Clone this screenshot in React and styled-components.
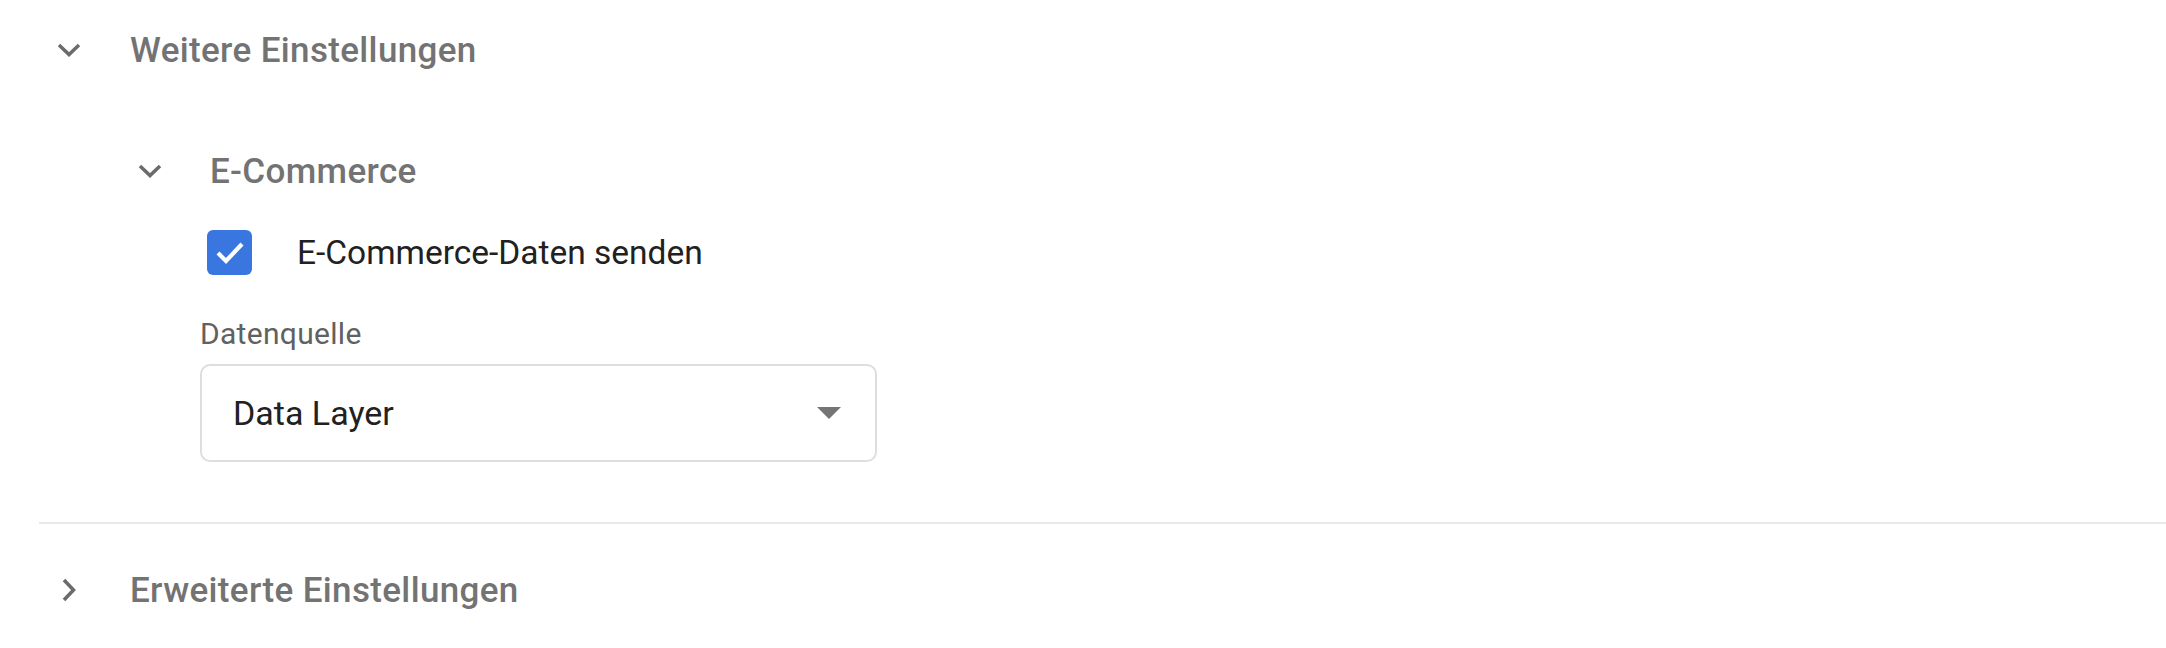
import React from 'react'
import styled, { createGlobalStyle } from 'styled-components'

const GlobalStyle = createGlobalStyle`
  html, body {
    margin: 0;
    padding: 0;
    background: #ffffff;
  }
  body {
    font-family: Roboto, "Liberation Sans", Arial, sans-serif;
    -webkit-font-smoothing: antialiased;
  }
`

const Page = styled.div`
  width: 2166px;
  height: 648px;
  overflow: hidden;
  background: #fff;
`

const HeaderRow = styled.div`
  display: flex;
  align-items: center;
  height: ${(p) => p.$height}px;
  padding-left: ${(p) => p.$indent}px;
  margin-top: ${(p) => p.$top || 0}px;
  gap: ${(p) => p.$gap}px;
  cursor: pointer;
`

const IconBox = styled.span`
  display: flex;
  align-items: center;
  justify-content: center;
  width: 24px;
  height: 24px;
  color: #6b6b6b;
  flex: none;
`

const HeaderTitle = styled.span`
  font-size: 35px;
  font-weight: 500;
  color: #737373;
  letter-spacing: 0.35px;
  line-height: 1;
`

const Body = styled.div`
  padding-left: 200px;
`

const CheckRow = styled.label`
  display: flex;
  align-items: center;
  gap: 45px;
  margin-top: 29px;
  margin-left: 7px;
  height: 45px;
`

const Box = styled.span`
  width: 45px;
  height: 45px;
  border-radius: 6px;
  background: ${(p) => (p.$checked ? '#3a76e0' : '#fff')};
  display: flex;
  align-items: center;
  justify-content: center;
  flex: none;
`

const CheckLabel = styled.span`
  font-size: 33.5px;
  color: #212121;
  line-height: 1;
`

const FieldLabel = styled.div`
  margin-top: 41px;
  font-size: 30px;
  color: #616161;
  line-height: 36px;
  letter-spacing: 0.3px;
`

const Select = styled.div`
  box-sizing: border-box;
  margin-top: 12px;
  width: 677px;
  height: 98px;
  border: 2px solid #dedede;
  border-radius: 10px;
  display: flex;
  align-items: center;
  justify-content: space-between;
  padding: 0 34px 0 31px;
`

const SelectValue = styled.span`
  font-size: 34px;
  color: #212121;
`

const Divider = styled.div`
  margin-top: 60px;
  margin-left: 39px;
  height: 2px;
  background: #e8e8e8;
`

const ChevronDown = () => (
  <svg width="24" height="14" viewBox="0 0 24 14">
    <polyline points="2,2 12,11.5 22,2" fill="none" stroke="currentColor" strokeWidth="3.5" />
  </svg>
)

const ChevronRight = () => (
  <svg width="14" height="24" viewBox="0 0 14 24">
    <polyline points="2,2 11.5,12 2,22" fill="none" stroke="currentColor" strokeWidth="3.5" />
  </svg>
)

const Check = () => (
  <svg width="45" height="45" viewBox="0 0 45 45">
    <polyline points="11,23 19,31 35,14" fill="none" stroke="#fff" strokeWidth="4.2" />
  </svg>
)

const Caret = () => (
  <svg width="24" height="12" viewBox="0 0 24 12">
    <polygon points="0,0 24,0 12,12" fill="#757575" />
  </svg>
)

export default function App() {
  return (
    <Page>
      <GlobalStyle />
      <HeaderRow $height={100} $indent={57} $gap={49}>
        <IconBox><ChevronDown /></IconBox>
        <HeaderTitle>Weitere Einstellungen</HeaderTitle>
      </HeaderRow>

      <HeaderRow $height={60} $indent={138} $gap={48} $top={41}>
        <IconBox><ChevronDown /></IconBox>
        <HeaderTitle>E-Commerce</HeaderTitle>
      </HeaderRow>

      <Body>
        <CheckRow>
          <Box $checked><Check /></Box>
          <CheckLabel>E-Commerce-Daten senden</CheckLabel>
        </CheckRow>
        <FieldLabel>Datenquelle</FieldLabel>
        <Select>
          <SelectValue>Data Layer</SelectValue>
          <Caret />
        </Select>
      </Body>

      <Divider />

      <HeaderRow $height={132} $indent={57} $gap={49}>
        <IconBox><ChevronRight /></IconBox>
        <HeaderTitle>Erweiterte Einstellungen</HeaderTitle>
      </HeaderRow>
    </Page>
  )
}
